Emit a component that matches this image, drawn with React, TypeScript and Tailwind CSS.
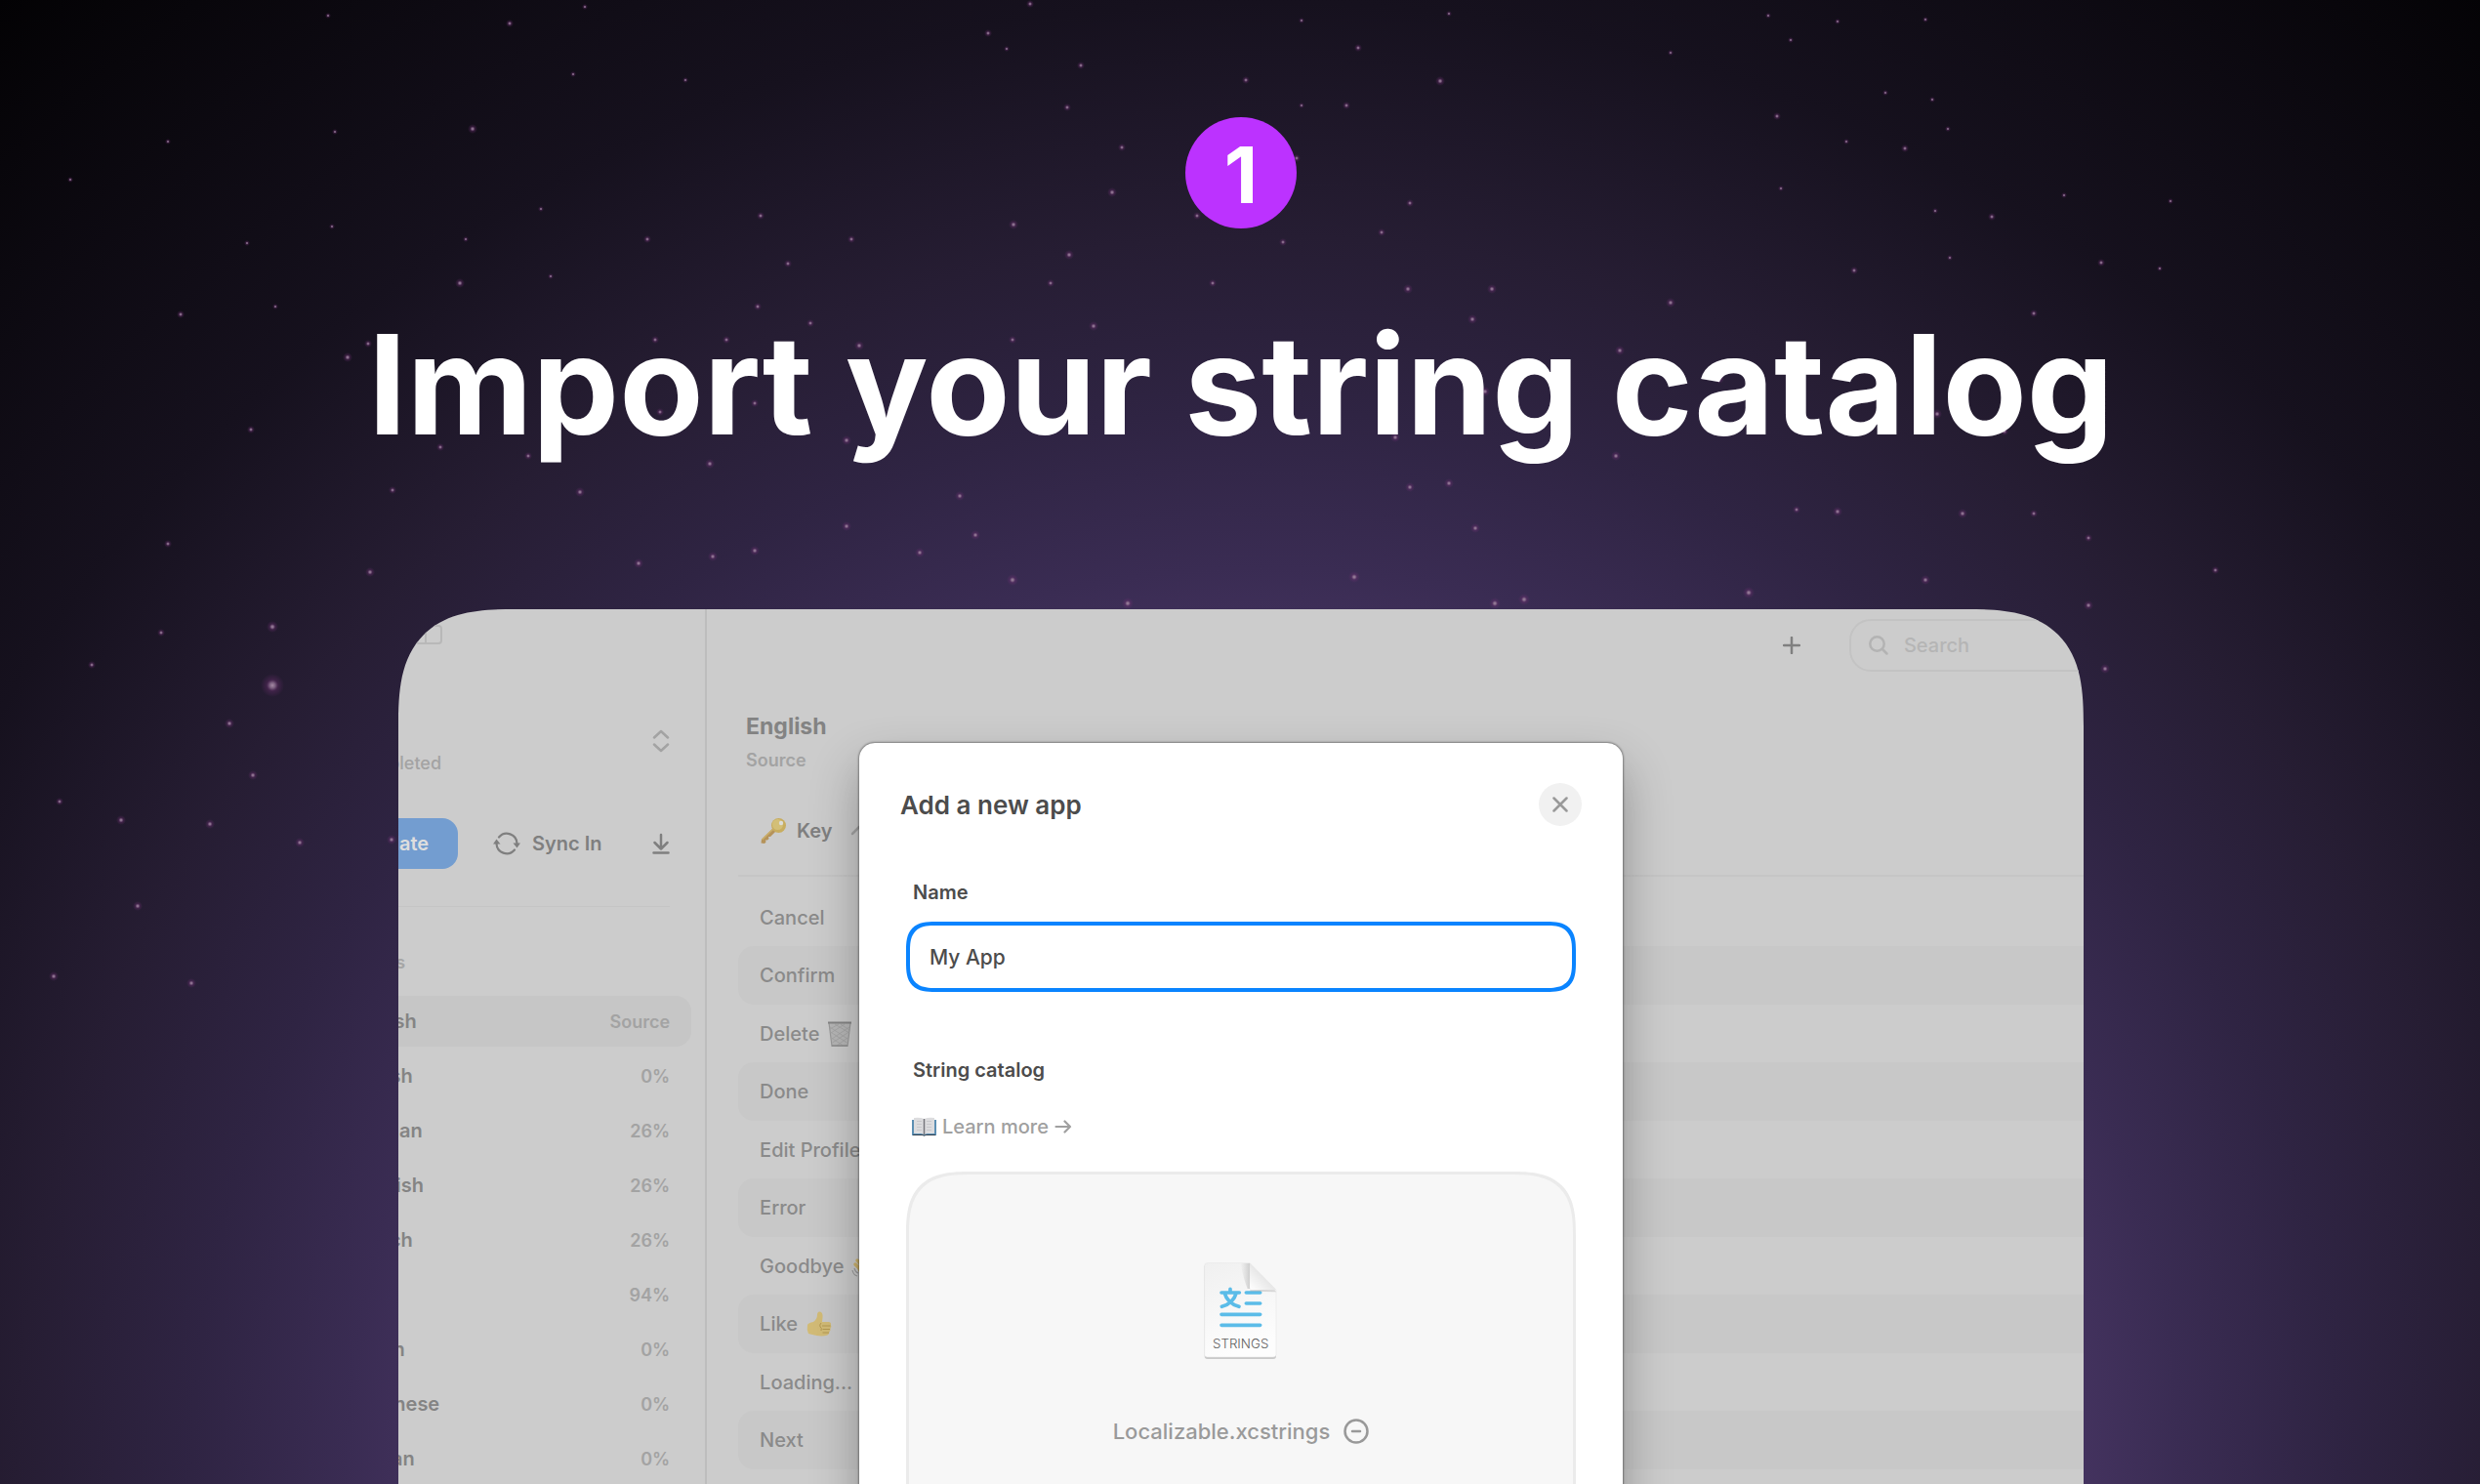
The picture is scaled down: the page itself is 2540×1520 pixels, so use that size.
import { useState, FormEvent, ReactNode } from 'react';

interface Language {
    name: string;
    progress: string;
}

interface StringKey {
    key: string;
    emoji?: ReactNode;
}

// x, y, size
type Star = [number, number, number];

const STARS: Star[] = [
    [336, 16, 2], [599, 7, 2], [522, 24, 3], [1055, 4, 3], [1012, 34, 3], [1031, 50, 2], [1107, 67, 3],
    [587, 76, 2], [702, 82, 2], [1093, 110, 3], [343, 135, 2], [484, 132, 4], [172, 145, 2], [1149, 151, 3],
    [72, 184, 2], [1139, 197, 4], [554, 214, 2], [779, 221, 3], [340, 232, 2], [477, 245, 2], [663, 245, 3],
    [872, 245, 3], [1038, 230, 4], [1095, 261, 4], [253, 249, 2], [807, 270, 3], [564, 283, 2], [471, 290, 4],
    [1076, 290, 3], [1242, 290, 3], [1226, 221, 3], [185, 322, 3], [282, 314, 2], [776, 314, 3], [830, 331, 3],
    [1120, 334, 4], [671, 348, 3], [744, 348, 3], [1037, 348, 3], [880, 354, 4], [377, 352, 3], [356, 366, 4],
    [773, 413, 3], [676, 422, 3], [257, 440, 3], [451, 458, 3], [541, 467, 3], [727, 475, 4], [867, 451, 4],
    [402, 502, 3], [594, 504, 4], [983, 508, 4], [867, 539, 4], [999, 548, 4], [172, 557, 3], [773, 564, 4],
    [942, 566, 4], [730, 570, 4], [654, 577, 4], [379, 586, 4], [1037, 594, 5], [1155, 618, 5], [279, 642, 5],
    [165, 648, 3], [94, 681, 3], [279, 702, 11], [235, 741, 4], [1333, 21, 2], [1484, 14, 2], [1811, 16, 2],
    [1882, 22, 2], [1972, 20, 2], [1391, 49, 3], [1711, 54, 2], [1834, 41, 2], [1276, 82, 3], [1475, 83, 4],
    [1333, 108, 2], [1379, 108, 3], [1931, 95, 2], [1979, 102, 2], [1820, 119, 3], [1995, 132, 2], [1891, 145, 2],
    [1951, 152, 3], [1328, 162, 3], [1824, 193, 2], [2114, 200, 2], [2223, 206, 2], [1444, 208, 3], [1982, 216, 2],
    [2040, 222, 3], [1415, 238, 3], [1314, 248, 3], [1997, 264, 2], [2152, 269, 3], [1899, 277, 3], [2212, 275, 2],
    [1442, 296, 4], [1528, 296, 4], [1711, 310, 4], [2083, 321, 3], [1508, 327, 4], [1659, 359, 4], [1761, 388, 4],
    [1521, 401, 4], [1984, 424, 4], [2053, 442, 3], [1429, 448, 4], [1655, 467, 4], [1444, 499, 4], [1484, 495, 4],
    [1840, 522, 3], [1882, 524, 4], [2010, 526, 4], [2083, 526, 3], [1511, 541, 4], [2139, 551, 3], [2269, 584, 3],
    [1387, 591, 5], [1972, 594, 4], [1791, 607, 5], [1531, 618, 5], [1561, 614, 5], [2139, 620, 4], [2156, 685, 4],
    [259, 794, 4], [61, 821, 3], [124, 840, 4], [215, 844, 4], [307, 863, 4], [401, 860, 4], [141, 928, 4],
    [55, 1000, 4], [196, 1007, 4],
];

const LANGUAGES: Language[] = [
    { name: 'English', progress: 'Source' },
    { name: 'Danish', progress: '0%' },
    { name: 'German', progress: '26%' },
    { name: 'Spanish', progress: '26%' },
    { name: 'French', progress: '26%' },
    { name: 'Hindi', progress: '94%' },
    { name: 'Italian', progress: '0%' },
    { name: 'Japanese', progress: '0%' },
    { name: 'Korean', progress: '0%' },
];

const Starfield = () => (
    <svg
        className="absolute inset-0 h-full w-full"
        viewBox="0 0 2540 1520"
        preserveAspectRatio="xMidYMin slice"
        aria-hidden="true"
    >
        <defs>
            <radialGradient id="star">
                <stop offset="0" stopColor="#a78ba6" />
                <stop offset="0.25" stopColor="#86688a" stopOpacity="0.85" />
                <stop offset="0.5" stopColor="#6f3072" stopOpacity="0.35" />
                <stop offset="1" stopColor="#6f3072" stopOpacity="0" />
            </radialGradient>
        </defs>
        {STARS.map(([x, y, size]) => (
            <circle key={`${x}-${y}`} cx={x} cy={y} r={size + 1} fill="url(#star)" />
        ))}
    </svg>
);

const KeyEmoji = () => (
    <svg width="28" height="28" viewBox="0 0 28 28" aria-hidden="true">
        <path d="M14 11 2 22.500 1.500 26.500 5 27 6.500 25.500 6 23.500 8 23.500 9.500 22 9 20 11 20 17 14Z" fill="#b5935a" />
        <path d="M14.500 11.500 2.500 23" stroke="#cbb06c" strokeWidth="1.500" />
        <circle cx="19.500" cy="8.500" r="7.500" fill="#c8ad5f" />
        <circle cx="18.500" cy="7.500" r="5.500" fill="#d3bf77" />
        <circle cx="22" cy="6" r="2.200" fill="#dcdcd6" />
    </svg>
);

const TrashEmoji = () => (
    <svg width="26" height="28" viewBox="0 0 26 28" aria-hidden="true">
        <path d="M2 2.500h22l-3 24H5Z" fill="#b7b7b7" stroke="#9a9a9a" strokeWidth="1.200" />
        <path
            d="M3 7l18 12M3.500 12l17 11M4.500 18l12 8M8 4l15 9M14 4l9 6M23 7 5 19M22.500 12 5.500 23M21 18 10 26M18 4 4 13M12 4 3 9"
            stroke="#a3a3a3"
            strokeWidth="0.800"
        />
        <path d="M1 2.500h24" stroke="#858585" strokeWidth="2" />
        <path d="M5 26h16" stroke="#919191" strokeWidth="1.500" />
    </svg>
);

const WaveEmoji = () => (
    <svg width="28" height="28" viewBox="0 0 28 28" aria-hidden="true">
        <path
            d="M4 12 9 17M6 8 13 15M10 5 17 13M15 4l6 9"
            stroke="#cdb36c"
            strokeWidth="3.500"
            strokeLinecap="round"
        />
        <path d="M5 14 18 8q2 2 3-3 3-1 3 6 1 9-5 13-7 2-11-4Z" fill="#cdb36c" />
        <path d="M1 18q1 5 5 6M3 16q1 4 4 5" stroke="#9c9c9c" strokeWidth="1.200" fill="none" />
    </svg>
);

const ThumbEmoji = () => (
    <svg width="28" height="28" viewBox="0 0 28 28" aria-hidden="true">
        <path
            d="M2 15Q3 13 8 12q4-3 4-7Q12 1 15 1.500q3 1 2.500 6L17 12h7q2.500.500 2 3 1 2-.500 3.500.500 2-1 3.500 0 2.500-2 3.500-5 1.500-11 .500Q7 25 3 24Q1 20 2 15Z"
            fill="#d2bb76"
        />
        <path d="M17 16h8.500M17.500 19.500H25M17.500 23H24M16 13q-2 2-1 4 2 1 1 4" stroke="#b39852" strokeWidth="1" fill="none" />
    </svg>
);

const BookEmoji = () => (
    <svg width="25" height="20" viewBox="0 0 25 20" aria-hidden="true">
        <path d="M0 3h3v14h19V3h3v16H0Z" fill="#5c8fb3" />
        <path d="M2 1q6-1 10.500 1Q17 0 23 1v16q-6-1-10.500 1Q8 16 2 17Z" fill="#dcdcde" />
        <path d="M12.500 2v16" stroke="#77777c" strokeWidth="1.500" />
        <path d="M5 4.500h5M5 7.500h5M5 10.500h5M5 13.500h5M15 4.500h5M15 7.500h5M15 10.500h5M15 13.500h5" stroke="#c3c3c8" strokeWidth="0.800" />
        <path d="M1 18.500h10l1.500.800 1.500-.800h10" stroke="#34424f" strokeWidth="1" fill="none" />
    </svg>
);

const STRING_KEYS: StringKey[] = [
    { key: 'Cancel' },
    { key: 'Confirm' },
    { key: 'Delete', emoji: <TrashEmoji /> },
    { key: 'Done' },
    { key: 'Edit Profile' },
    { key: 'Error' },
    { key: 'Goodbye', emoji: <WaveEmoji /> },
    { key: 'Like', emoji: <ThumbEmoji /> },
    { key: 'Loading...' },
    { key: 'Next' },
];

// Document icon for .xcstrings files
const StringsFileIcon = () => (
    <svg className="h-[100px] w-[75px]" viewBox="58 40 225 300" aria-hidden="true">
        <defs>
            <linearGradient id="paper" x1="0" y1="0" x2="0.3" y2="1">
                <stop offset="0" stopColor="#f0f0f0" />
                <stop offset="1" stopColor="#fdfdfd" />
            </linearGradient>
            <linearGradient id="fold" x1="0" y1="1" x2="0.6" y2="0.4">
                <stop offset="0" stopColor="#ffffff" />
                <stop offset="1" stopColor="#e2e2e2" />
            </linearGradient>
            <linearGradient id="foldShade" x1="0" y1="0" x2="1" y2="0">
                <stop offset="0" stopColor="#c4c4c4" stopOpacity="0" />
                <stop offset="1" stopColor="#bdbdbd" />
            </linearGradient>
        </defs>
        <path d="M68 45H199L280 127V328q0 9-9 9H69q-9 0-9-9V53q0-8 8-8Z" fill="#c9c9c9" />
        <path d="M68 42H199L280 124V323q0 8-9 8H69q-9 0-9-8V51q0-9 8-9Z" fill="url(#paper)" stroke="#e2e2e2" strokeWidth="1.500" />
        <path d="M170 43h30v78h-8q-12-30-22-78Z" fill="url(#foldShade)" opacity="0.700" />
        <g stroke="#5bbce8" strokeWidth="11" strokeLinecap="round" strokeLinejoin="round" fill="none">
            <path d="M188 133h43M188 166h43M112 200h119M112 233h119" />
            <path d="M139 122v9M112 133h55M122 135q8 30 44 41M157 135q-8 30-44 41" />
        </g>
        <path d="M200 125q40-2 76 0l4 6q-40-2-80-2Z" fill="#9a9a9a" opacity="0.350" />
        <path d="M199 42 280 124H208q-9 0-9-9Z" fill="url(#fold)" />
        <text
            x="171"
            y="305"
            textAnchor="middle"
            fontSize="40"
            className="font-['Inter',sans-serif] font-light"
            fill="#606060"
        >
            STRINGS
        </text>
    </svg>
);

const Sidebar = () => (
    <aside className="w-[316px] shrink-0 overflow-hidden border-r-2 border-[#bdbdbd]">
        {/* The sidebar slides under the left edge of the window */}
        <div className="-ml-[60px] pr-[14px] pt-4">
            <svg className="ml-[77px]" width="28" height="20" viewBox="0 0 28 20" fill="none" stroke="#b8b8b8" strokeWidth="2" aria-hidden="true">
                <rect x="1" y="1" width="26" height="18" rx="3" />
                <path d="M11 1v18" />
            </svg>

            <div className="mt-16 flex h-[70px] items-center justify-between pr-[22px]">
                <div className="flex w-[104px] justify-end self-end">
                    <span className="whitespace-nowrap text-[18px] font-medium leading-6 text-[#a3a3a3]">Completed</span>
                </div>
                <button type="button" aria-label="Switch app">
                    <svg width="18" height="24" viewBox="0 0 18 24" fill="none" stroke="#a3a3a3" strokeWidth="2.500" strokeLinecap="round" strokeLinejoin="round">
                        <path d="M2 8.500 9 2l7 6.500M2 15.500 9 22l7-6.500" />
                    </svg>
                </button>
            </div>

            <div className="mt-11 flex items-center pr-[22px]">
                <button
                    type="button"
                    className="flex h-[52px] w-[121px] items-center justify-end rounded-2xl bg-[#739dd0] pr-[30px] text-[20px] font-semibold text-[#dedede]"
                >
                    Translate
                </button>
                <button type="button" className="ml-9 flex items-center gap-3 whitespace-nowrap text-[20px] font-semibold text-[#7f7f7f]">
                    <svg width="28" height="24" viewBox="0 0 28 24" fill="none" stroke="#7f7f7f" strokeWidth="2.200" strokeLinecap="round">
                        <path d="M6 5.500A10.500 10.500 0 0 1 24.500 12M22 18.500A10.500 10.500 0 0 1 3.500 12" />
                        <path d="M20.500 11.500h7.500L24.500 16.500Z M0 12.500h7.500L3.500 7.500Z" fill="#7f7f7f" stroke="none" />
                    </svg>
                    Sync In
                </button>
                <button type="button" aria-label="Download" className="ml-auto">
                    <svg width="18" height="22" viewBox="0 0 18 22" fill="none" stroke="#7f7f7f" strokeWidth="2.500" strokeLinecap="round" strokeLinejoin="round">
                        <path d="M9 2v14M2.500 10 9 16.500 15.500 10M1.500 20.500h15" />
                    </svg>
                </button>
            </div>

            <hr className="mr-[22px] mt-[38px] border-[#c5c5c5]" />

            <div className="flex w-[67px] justify-end">
                <h3 className="mt-[45px] text-[18px] font-semibold leading-6 text-[#a6a6a6]">Locales</h3>
            </div>
            <ul className="mt-[22px] flex flex-col gap-1">
                {LANGUAGES.map((language, index) => (
                    <li
                        key={language.name}
                        className={
                            index === 0
                                ? 'flex h-[52px] items-center justify-between rounded-2xl bg-[#c6c6c6] pl-2 pr-[22px]'
                                : 'flex h-[52px] items-center justify-between pl-2 pr-[22px]'
                        }
                    >
                        <span className="text-[20px] font-semibold text-[#848484]">{language.name}</span>
                        <span className="text-[18px] font-semibold text-[#a3a3a3]">{language.progress}</span>
                    </li>
                ))}
            </ul>
        </div>
    </aside>
);

const StringsPane = () => (
    <section className="min-w-0 flex-1">
        <div className="flex items-center justify-end pt-[10px]">
            <button type="button" aria-label="Add string">
                <svg width="18" height="18" viewBox="0 0 18 18" stroke="#808080" strokeWidth="2.500" strokeLinecap="round">
                    <path d="M9 1v16M1 9h16" />
                </svg>
            </button>
            <label className="-mr-10 ml-[50px] flex h-[54px] w-[280px] shrink-0 items-center gap-4 rounded-[22px] border-2 border-[#c3c3c3] pl-[18px]">
                <svg width="20" height="20" viewBox="0 0 20 20" fill="none" stroke="#b3b3b3" strokeWidth="2.500" strokeLinecap="round" aria-hidden="true">
                    <circle cx="8.500" cy="8.500" r="7.200" />
                    <path d="M14 14l4.500 4.500" />
                </svg>
                <input
                    type="search"
                    aria-label="Search"
                    placeholder="Search"
                    className="w-40 bg-transparent text-[20px] font-medium outline-none placeholder:text-[#b5b5b5]"
                />
            </label>
        </div>

        <div className="mt-10 pl-10">
            <h2 className="text-[23px] font-bold leading-8 text-[#838383]">English</h2>
            <p className="mt-[7px] text-[18px] font-semibold leading-6 text-[#a3a3a3]">Source</p>
        </div>

        <div className="mt-[14px] pl-8">
            <table className="w-full border-separate border-spacing-0 text-left text-[20px]">
                <thead>
                    <tr>
                        <th className="h-[93px] border-b-2 border-[#c6c6c6] pl-[22px] font-semibold text-[#7f7f7f]">
                            <span className="flex items-center gap-[10px]">
                                <KeyEmoji />
                                Key
                                <svg className="ml-2" width="18" height="11" viewBox="0 0 18 11" fill="none" stroke="#a3a3a3" strokeWidth="2.500" strokeLinecap="round" strokeLinejoin="round" aria-hidden="true">
                                    <path d="M2 9 9 2l7 7" />
                                </svg>
                            </span>
                        </th>
                    </tr>
                </thead>
                <tbody>
                    {STRING_KEYS.map((row, index) => (
                        <tr key={row.key} className="group">
                            <td
                                className={
                                    index % 2 === 1
                                        ? 'h-[60px] rounded-l-2xl bg-[#c8c8c8] pl-[22px] font-medium text-[#8a8a8a]'
                                        : 'h-[59px] pl-[22px] font-medium text-[#8a8a8a] group-first:h-[71px] group-first:pt-3'
                                }
                            >
                                <span className="flex items-center gap-2">
                                    {row.key}
                                    {row.emoji}
                                </span>
                            </td>
                        </tr>
                    ))}
                </tbody>
            </table>
        </div>
    </section>
);

const AddAppDialog = () => {
    const [name, setName] = useState('My App');

    const handleSubmit = (e: FormEvent<HTMLFormElement>) => {
        e.preventDefault();
    };

    return (
        <form
            role="dialog"
            aria-labelledby="dialog-title"
            onSubmit={handleSubmit}
            className="absolute left-1/2 top-[137px] h-[1000px] w-[782px] -translate-x-1/2 rounded-2xl bg-white pt-[41px] text-[#4c4c4c] shadow-[0_0_2px_1px_rgba(0,0,0,0.35),0_24px_50px_rgba(0,0,0,0.3)]"
        >
            <div className="flex items-center justify-between pl-[42px] pr-[42px]">
                <h2 id="dialog-title" className="text-[26px] font-semibold">Add a new app</h2>
                <button type="button" aria-label="Close" className="flex h-11 w-11 items-center justify-center rounded-full bg-[#f1f1f1]">
                    <svg width="16" height="16" viewBox="0 0 16 16" stroke="#999999" strokeWidth="2.500" strokeLinecap="round">
                        <path d="M1.500 1.500l13 13M14.500 1.500l-13 13" />
                    </svg>
                </button>
            </div>

            <div className="mt-[54px] px-12">
                <label htmlFor="app-name" className="block pl-[7px] text-[20px] font-semibold leading-7">Name</label>
                <input
                    id="app-name"
                    type="text"
                    value={name}
                    onChange={(e) => setName(e.target.value)}
                    className="mt-4 h-[72px] w-full rounded-[30px] border-4 border-[#0a84ff] px-5 text-[21px] font-medium outline-none [corner-shape:superellipse(1.5)]"
                />

                <h3 className="mt-[66px] pl-[7px] text-[20px] font-semibold leading-7">String catalog</h3>
                <a href="#learn-more" className="ml-[6px] mt-[30px] flex w-fit items-center gap-[6px] text-[20px] font-medium leading-7 text-[#a0a0a0]">
                    <BookEmoji />
                    Learn more
                    <svg width="18" height="14" viewBox="0 0 18 14" fill="none" stroke="#a0a0a0" strokeWidth="2.200" strokeLinecap="round" strokeLinejoin="round" aria-hidden="true">
                        <path d="M1.500 7h14.500M10.500 1.500 16 7l-5.500 5.500" />
                    </svg>
                </a>

                <div className="mt-8 flex h-[640px] flex-col items-center rounded-[66px] border-[3px] border-[#ebebeb] bg-[#f7f7f7] pt-[90px] [corner-shape:superellipse(1.5)]">
                    <StringsFileIcon />
                    <div className="mt-[59px] flex items-center gap-[14px] text-[22px] font-medium leading-7 text-[#9a9a9a]">
                        Localizable.xcstrings
                        <button type="button" aria-label="Remove file">
                            <svg width="26" height="26" viewBox="0 0 26 26" fill="none" stroke="#999999" strokeWidth="2.500" strokeLinecap="round">
                                <circle cx="13" cy="13" r="11.500" />
                                <path d="M9 13h8" />
                            </svg>
                        </button>
                    </div>
                </div>
            </div>
        </form>
    );
};

const App: React.FC = () => {
    return (
        <main className="relative h-screen overflow-hidden bg-[radial-gradient(circle_at_51%_100%,#56407a_0%,#473563_40%,#3a2c53_47%,#2f2443_55%,#261d33_64%,#16111e_76%,#030204_100%)] font-['Inter',sans-serif]">
            <Starfield />

            <div className="relative flex flex-col items-center pl-0.5 pt-[120px]">
                <span className="flex h-[114px] w-[114px] items-center justify-center rounded-full bg-[#bc32ff] pt-1 text-[80px] font-bold leading-none text-white">
                    1
                </span>
                <h1 className="mt-[89px] whitespace-nowrap text-[141px] font-bold leading-none text-white">
                    Import your string catalog
                </h1>

                {/* App window, its lower part runs off the page */}
                <div className="relative mt-40 flex h-[1100px] w-[68%] overflow-hidden rounded-t-[120px] bg-[#cccccc] [corner-shape:superellipse(1.5)]">
                    <Sidebar />
                    <StringsPane />
                    <AddAppDialog />
                </div>
            </div>
        </main>
    );
};

export default App;
